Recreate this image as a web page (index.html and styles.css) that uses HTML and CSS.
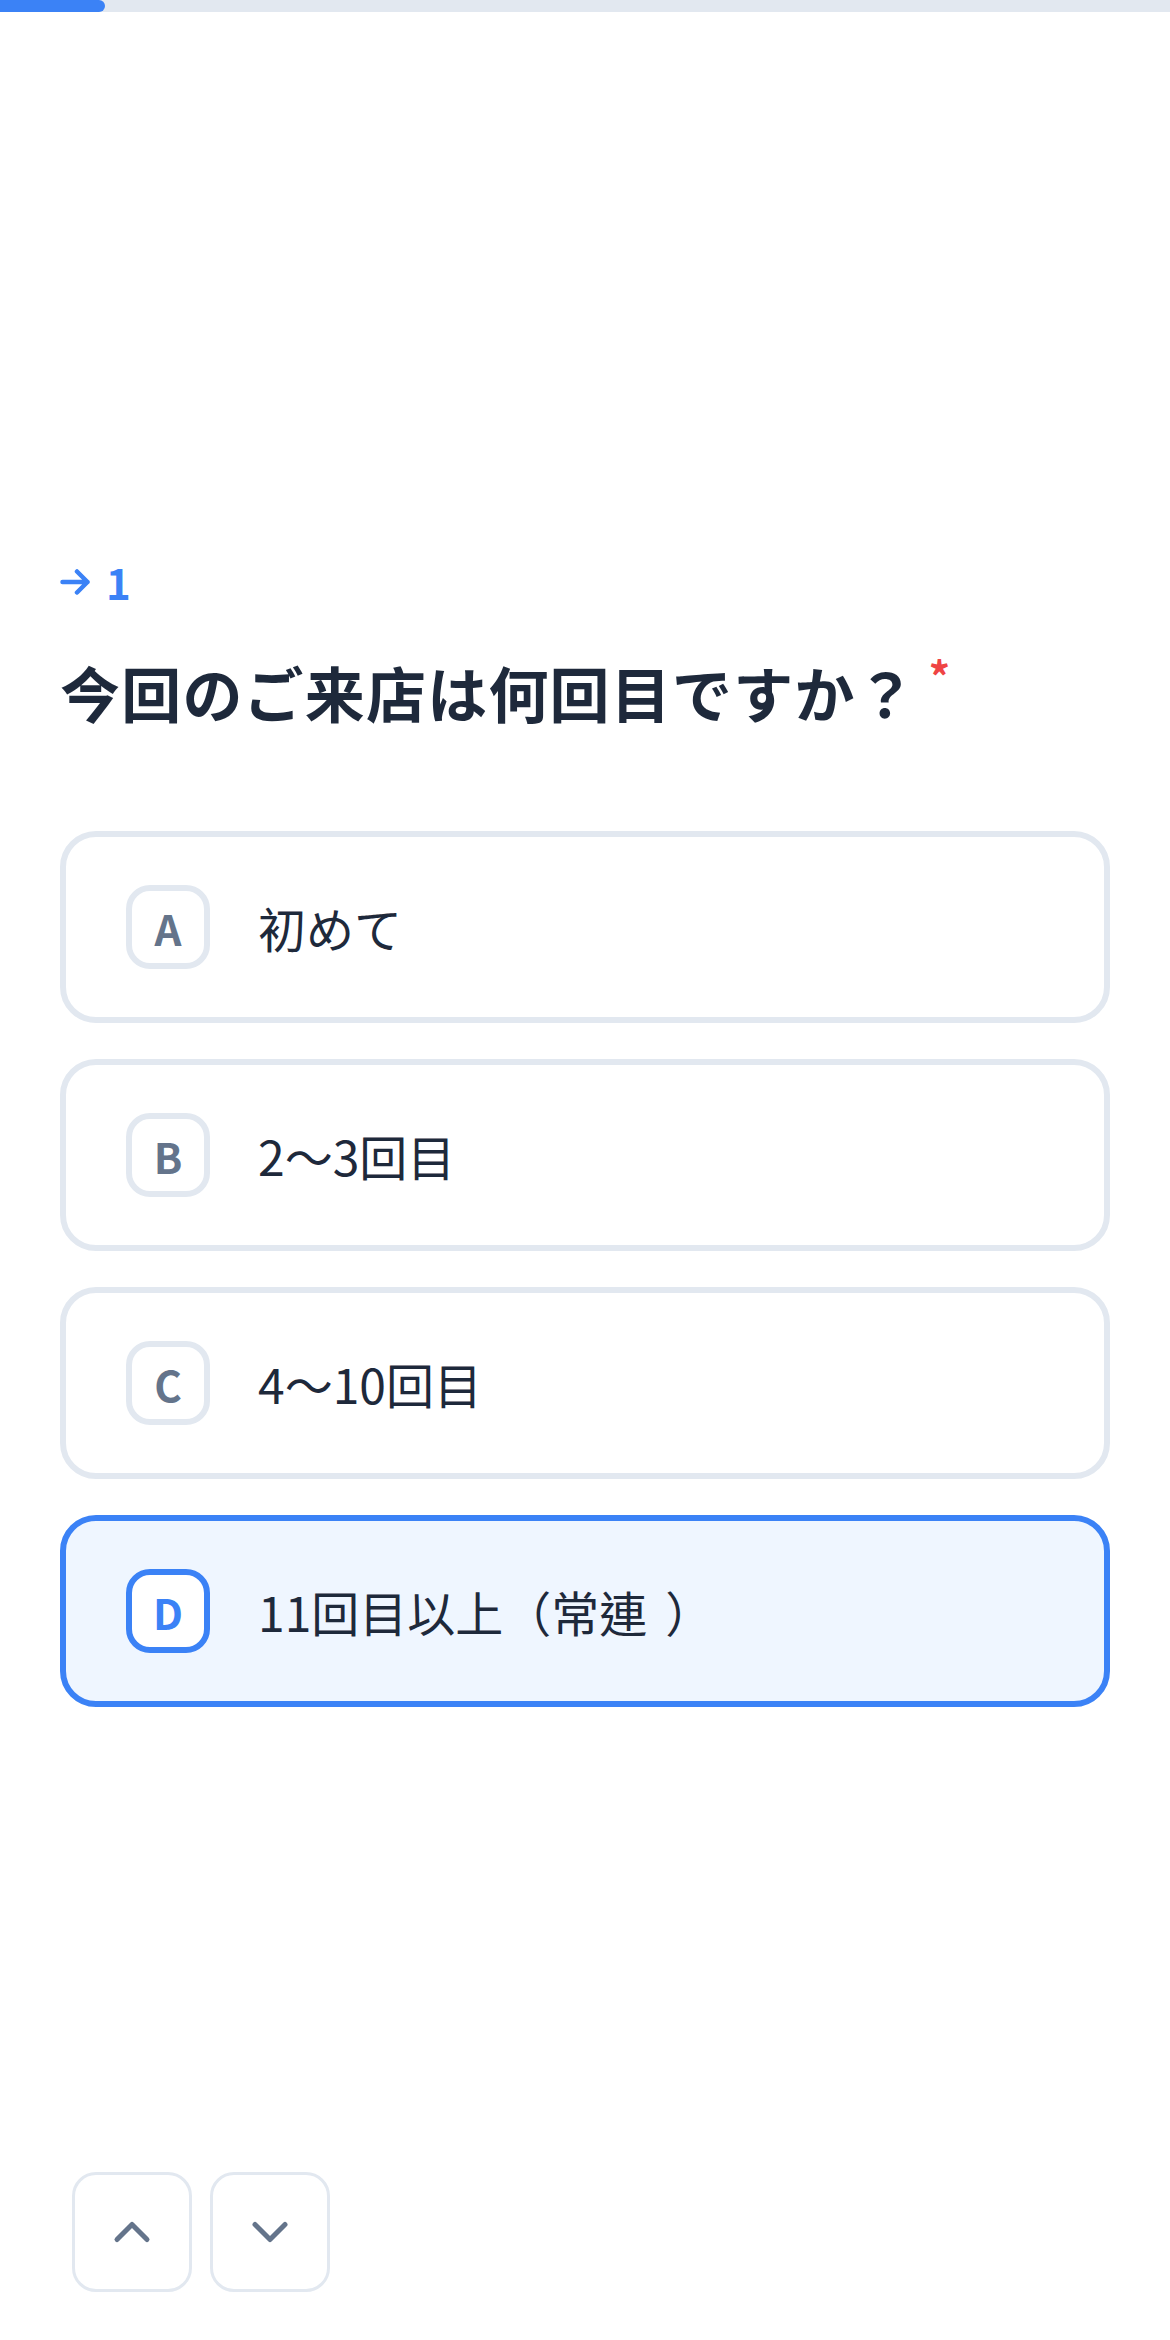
FILE: index.html
```html
<!DOCTYPE html>
<html lang="ja">
<head>
<meta charset="utf-8">
<title>アンケート</title>
<link rel="stylesheet" href="styles.css">
</head>
<body>
<div class="page">
  <div class="progress"><div class="progress-fill"></div></div>
  <main class="main">
    <div class="qnum">
      <svg class="qnum-arrow" width="30" height="26" viewBox="0 0 30 26" fill="none" stroke="currentColor" stroke-width="4.5" stroke-linecap="round" stroke-linejoin="round"><path d="M2.5 13H27.5M17 2.5L27.5 13L17 23.5"/></svg>
      <span>1</span>
    </div>
    <h1 class="title">今回のご来店は何回目ですか？<span class="required">*</span></h1>
    <div class="options">
      <div class="option"><span class="key">A</span><span class="label">初めて</span></div>
      <div class="option"><span class="key">B</span><span class="label">2〜3回目</span></div>
      <div class="option"><span class="key">C</span><span class="label">4〜10回目</span></div>
      <div class="option selected"><span class="key">D</span><span class="label">11回目以上（常連<span class="paren-close">）</span></span></div>
    </div>
  </main>
  <nav class="nav">
    <button class="nav-btn" type="button" aria-label="前へ">
      <svg width="60" height="60" viewBox="0 0 24 24" fill="none" stroke="currentColor" stroke-width="2" stroke-linecap="round" stroke-linejoin="round"><path d="m18 15-6-6-6 6"/></svg>
    </button>
    <button class="nav-btn" type="button" aria-label="次へ">
      <svg width="60" height="60" viewBox="0 0 24 24" fill="none" stroke="currentColor" stroke-width="2" stroke-linecap="round" stroke-linejoin="round"><path d="m6 9 6 6 6-6"/></svg>
    </button>
  </nav>
</div>
</body>
</html>
```

FILE: styles.css
```css
* { box-sizing: border-box; }
html, body { margin: 0; padding: 0; background: #ffffff; }
body {
  font-family: "Noto Sans CJK TC", "Noto Sans CJK JP", "Noto Sans", sans-serif;
  font-feature-settings: "locl" 0;
  color: #1e293b;
}
.page {
  width: 1170px;
  min-height: 2340px;
  display: flex;
  flex-direction: column;
}
.progress {
  height: 12px;
  background: #e2e8f0;
}
.progress-fill {
  width: 105px;
  height: 100%;
  background: #3b82f6;
  border-radius: 0 6px 6px 0;
}
.main {
  padding: 540px 60px 0;
}
.qnum {
  display: flex;
  align-items: center;
  gap: 16px;
  height: 60px;
  color: #3b82f6;
  font-size: 42px;
  font-weight: 700;
  line-height: 60px;
}
.qnum-arrow { display: block; flex: none; }
.title {
  margin: 38px 0 0;
  font-size: 60px;
  font-weight: 600;
  letter-spacing: 0.02em;
  line-height: 84px;
  color: #1e293b;
}
.required {
  color: #ef4444;
  font-size: 42px;
  font-weight: 700;
  letter-spacing: 0;
  vertical-align: top;
  line-height: 42px;
  margin-left: 12px;
  position: relative;
  top: 4px;
}
.options {
  margin-top: 97px;
  display: flex;
  flex-direction: column;
  gap: 36px;
}
.option {
  height: 192px;
  border: 6px solid #e2e8f0;
  border-radius: 36px;
  background: #ffffff;
  padding: 0 60px;
  display: flex;
  align-items: center;
  gap: 48px;
}
.key {
  width: 84px;
  height: 84px;
  flex: none;
  border: 6px solid #e2e8f0;
  border-radius: 24px;
  background: #ffffff;
  display: flex;
  align-items: center;
  justify-content: center;
  font-size: 42px;
  font-weight: 700;
  color: #64748b;
}
.label {
  font-size: 48px;
  font-weight: 400;
  color: #1e293b;
}
.paren-close {
  margin-left: 18px;
}
.option.selected {
  border-color: #3b82f6;
  background: #eff6ff;
}
.option.selected .key {
  border-color: #3b82f6;
  color: #3b82f6;
}
.nav {
  margin-top: auto;
  padding: 0 0 48px 72px;
  display: flex;
  gap: 18px;
}
.nav-btn {
  width: 120px;
  height: 120px;
  border: 3px solid #e2e8f0;
  border-radius: 24px;
  background: #ffffff;
  color: #64748b;
  padding: 0;
  display: flex;
  align-items: center;
  justify-content: center;
}
.nav-btn svg { display: block; }
```
